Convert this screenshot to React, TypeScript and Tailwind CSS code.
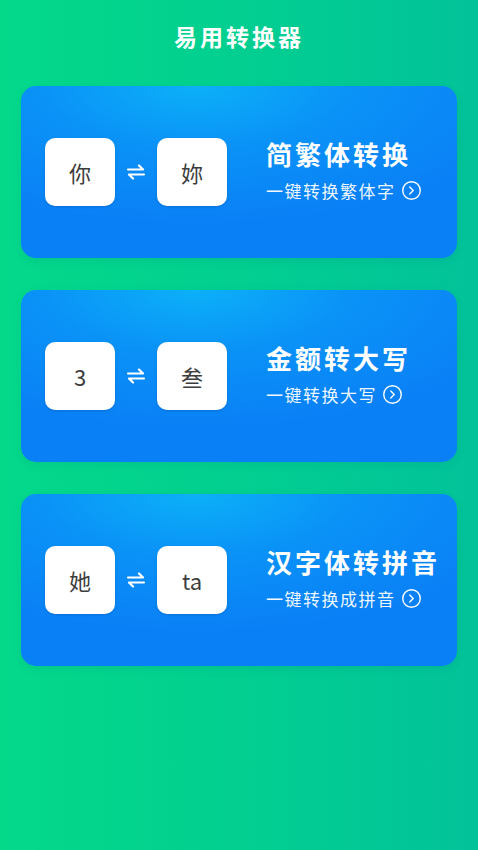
import { CircleChevronRight } from 'lucide-react'

interface Converter {
  from: string
  to: string
  title: string
  desc: string
}

const converters: Converter[] = [
  { from: '你', to: '妳', title: '简繁体转换', desc: '一键转换繁体字' },
  { from: '3', to: '叁', title: '金额转大写', desc: '一键转换大写' },
  { from: '她', to: 'ta', title: '汉字体转拼音', desc: '一键转换成拼音' },
]

function SwapArrow() {
  return (
    <svg width="20" height="16" viewBox="0 0 20 16" fill="none" stroke="white" strokeWidth="2.2" strokeLinecap="round" strokeLinejoin="round">
      <path d="M2 5.5h15l-4-4" />
      <path d="M18 10.5H3l4 4" />
    </svg>
  )
}

function CharBox({ text }: { text: string }) {
  return (
    <div className="w-[70px] h-[68px] bg-white rounded-[10px] flex items-center justify-center text-[22px] text-[#3d3d3d] shadow-sm">
      {text}
    </div>
  )
}

function ConverterCard({ item }: { item: Converter }) {
  return (
    <div className="h-[172px] rounded-[15px] flex items-center pl-[24px] shadow-[0_3px_8px_rgba(0,80,120,0.1)] bg-[radial-gradient(ellipse_80%_80%_at_40%_0%,#0cb0f8_0%,#0a92f7_45%,#0a80f6_100%)]">
      <CharBox text={item.from} />
      <div className="w-[42px] flex items-center justify-center">
        <SwapArrow />
      </div>
      <CharBox text={item.to} />
      <div className="ml-[39px] pb-[5px] flex flex-col text-white">
        <div className="text-[26px] font-bold tracking-[3px] leading-[32px]">{item.title}</div>
        <div className="mt-[10px] flex items-center gap-[5px]">
          <span className="text-[17px] tracking-[1.5px] leading-[22px] text-white/95">{item.desc}</span>
          <CircleChevronRight className="w-[21px] h-[21px]" strokeWidth={1.6} />
        </div>
      </div>
    </div>
  )
}

export default function App() {
  return (
    <div
      className="min-h-screen w-full bg-[linear-gradient(90deg,#04d98a_0%,#02cf90_50%,#02c29a_100%)]"
      style={{ fontFamily: '"Noto Sans CJK SC", "Noto Sans", sans-serif' }}
    >
      <div className="h-[72px] flex items-center justify-center">
        <h1 className="text-[23px] font-semibold tracking-[3px] text-white">易用转换器</h1>
      </div>
      <div className="px-[21px] pt-[14px] flex flex-col gap-[32px]">
        {converters.map((c) => (
          <ConverterCard key={c.title} item={c} />
        ))}
      </div>
    </div>
  )
}
